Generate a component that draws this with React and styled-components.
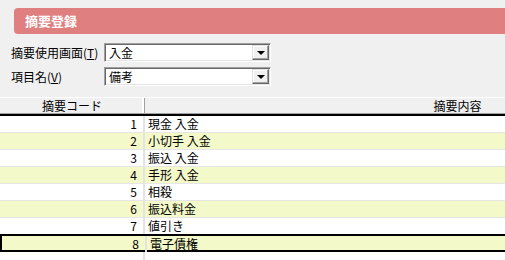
import React from 'react';
import styled, { createGlobalStyle } from 'styled-components';

const GlobalStyle = createGlobalStyle`
	html, body {
		margin: 0;
		padding: 0;
		background: #f0f0f0;
	}
	body {
		font-family: "Noto Sans CJK JP", "Liberation Sans", sans-serif;
		font-size: 12px;
		color: #000;
	}
`;

const rows = [
	{ code: 1, text: '現金 入金' },
	{ code: 2, text: '小切手 入金' },
	{ code: 3, text: '振込 入金' },
	{ code: 4, text: '手形 入金' },
	{ code: 5, text: '相殺' },
	{ code: 6, text: '振込料金' },
	{ code: 7, text: '値引き' },
	{ code: 8, text: '電子債権', selected: true },
];

function Combo({ value }) {
	return (
		<ComboBox>
			<ComboValue>{value}</ComboValue>
			<DropButton>
				<Arrow />
			</DropButton>
		</ComboBox>
	);
}

function App() {
	return (
		<Wrapper>
			<GlobalStyle />
			<TitleBar>摘要登録</TitleBar>
			<Form>
				<FieldRow>
					<Label>
						摘要使用画面(<u>T</u>)
					</Label>
					<Combo value='入金' />
				</FieldRow>
				<FieldRow>
					<Label>
						項目名(<u>V</u>)
					</Label>
					<Combo value='備考' />
				</FieldRow>
			</Form>
			<Grid>
				<HeaderRow>
					<HeaderCell>摘要コード</HeaderCell>
					<HeaderCell>摘要内容</HeaderCell>
				</HeaderRow>
				<Body>
					{rows.map((r, i) => (
						<Row key={r.code} $alt={i % 2 === 1} $selected={r.selected}>
							<CodeCell>{r.code}</CodeCell>
							<TextCell>{r.text}</TextCell>
						</Row>
					))}
					<Filler>
						<CodeCell />
						<TextCell />
					</Filler>
				</Body>
			</Grid>
		</Wrapper>
	);
}

const Wrapper = styled.div`
	width: 505px;
	height: 260px;
	overflow: hidden;
	display: flex;
	flex-direction: column;
	background: #f0f0f0;
`;

const TitleBar = styled.div`
	margin: 8px 0 0 14px;
	height: 26px;
	border-radius: 4px 0 0 4px;
	background: #e07f7f;
	color: #fff;
	font-weight: bold;
	font-size: 13px;
	line-height: 26px;
	padding-left: 11px;
`;

const Form = styled.div`
	display: flex;
	flex-direction: column;
	gap: 5px;
	padding: 9px 0 0 11px;
`;

const FieldRow = styled.div`
	display: flex;
	align-items: center;
	height: 19px;
`;

const Label = styled.div`
	width: 93px;
	line-height: 19px;
	white-space: nowrap;

	u {
		text-underline-offset: 1px;
	}
`;

const ComboBox = styled.div`
	box-sizing: border-box;
	width: 167px;
	height: 19px;
	display: flex;
	align-items: stretch;
	background: #fff;
	border-top: 1px solid #a0a0a0;
	border-left: 1px solid #a0a0a0;
	border-right: 1px solid #fff;
	border-bottom: 1px solid #fff;
	box-shadow: inset 1px 1px 0 #696969, inset -1px -1px 0 #e3e3e3;
	padding: 1px;
`;

const ComboValue = styled.div`
	flex: 1;
	padding-left: 3px;
	line-height: 15px;
`;

const DropButton = styled.div`
	box-sizing: border-box;
	width: 17px;
	display: flex;
	align-items: center;
	justify-content: center;
	background: #f0f0f0;
	border-top: 1px solid #e3e3e3;
	border-left: 1px solid #e3e3e3;
	border-right: 1px solid #696969;
	border-bottom: 1px solid #696969;
	box-shadow: inset -1px -1px 0 #a0a0a0, inset 1px 1px 0 #fff;
`;

const Arrow = styled.div`
	width: 0;
	height: 0;
	border-left: 4px solid transparent;
	border-right: 4px solid transparent;
	border-top: 4px solid #000;
	margin-top: 1px;
`;

const Grid = styled.div`
	margin-top: 11px;
	flex: 1;
	display: flex;
	flex-direction: column;
	width: 771px;
`;

const HeaderRow = styled.div`
	display: grid;
	grid-template-columns: 145px 626px;
	height: 15px;
	border-top: 1px solid #fff;
	border-bottom: 1px solid #a0a0a0;
	box-shadow: 0 2px 0 #000;
	margin-bottom: 2px;
`;

const HeaderCell = styled.div`
	text-align: center;
	line-height: 15px;
	background: #f0f0f0;
	border-right: 1px solid #a0a0a0;
	box-shadow: inset -2px 0 0 #fff;
`;

const Body = styled.div`
	flex: 1;
	display: flex;
	flex-direction: column;
	background: #fff;
`;

const Row = styled.div`
	box-sizing: border-box;
	display: grid;
	grid-template-columns: 145px 626px;
	height: 17px;
	background: ${(p) => (p.$alt ? '#f4f9c9' : '#fff')};
	border-bottom: 1px solid #e6e6e6;
	${(p) =>
		p.$selected &&
		`
		height: 18px;
		border: 2px solid #000;
		margin-top: -1px;
	`}
`;

const CodeCell = styled.div`
	text-align: right;
	padding-right: 6px;
	line-height: 16px;
	border-right: 2px solid #e3e3e3;
`;

const TextCell = styled.div`
	padding-left: 3px;
	line-height: 16px;
`;

const Filler = styled.div`
	flex: 1;
	display: grid;
	grid-template-columns: 145px 626px;
`;

export default App;
